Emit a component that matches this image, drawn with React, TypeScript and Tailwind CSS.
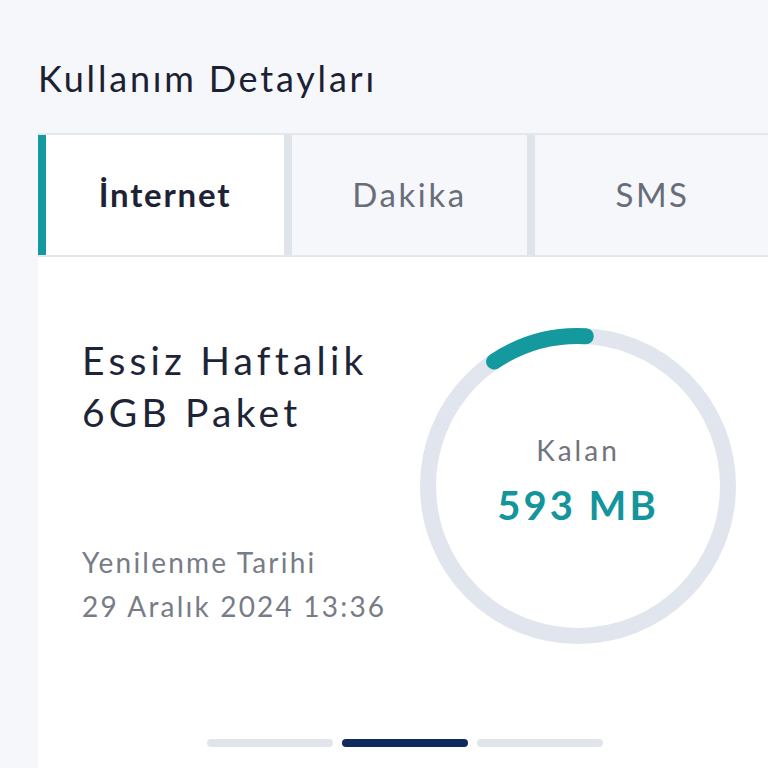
import React from "react";

const tabs = [
  { label: "İnternet", active: true },
  { label: "Dakika", active: false },
  { label: "SMS", active: false },
];

const UsageRing: React.FC = () => {
  return (
    <div className="relative w-[320px] h-[320px] shrink-0">
      <svg className="absolute inset-0" width="320" height="320" viewBox="0 0 320 320">
        <circle cx="160" cy="160" r="150" fill="none" stroke="#e1e5ed" strokeWidth="16" />
        <path
          d="M 76.1 35.6 A 150 150 0 0 1 167.8 10.2"
          fill="none"
          stroke="#14999f"
          strokeWidth="16"
          strokeLinecap="round"
        />
      </svg>
      <div className="relative flex h-full flex-col items-center justify-center pb-[12px]">
        <span className="text-[28px] leading-[40px] tracking-[3px] text-[#6f7480]">Kalan</span>
        <span className="mt-[10px] text-[40px] leading-[50px] tracking-[3px] font-bold text-[#14959c]">
          593 MB
        </span>
      </div>
    </div>
  );
};

const App: React.FC = () => {
  return (
    <div
      className="w-[768px] h-[768px] overflow-hidden bg-[#f5f7fa] pl-[38px]"
      style={{ fontFamily: "Lato, 'Noto Sans', sans-serif" }}
    >
      <h1 className="pt-[55px] pb-[32px] text-[36px] leading-[46px] tracking-[2.8px] text-[#1c2033]">
        Kullanım Detayları
      </h1>

      <div className="flex h-[124px] w-[740px] border-y-2 border-[#e4e7ec]">
        {tabs.map((tab, i) => (
          <React.Fragment key={tab.label}>
            {i > 0 && <div className="w-[8px] bg-[#dfe3ea]" />}
            <div
              className={
                tab.active
                  ? "flex w-[246px] items-center justify-center border-l-[8px] border-[#14999f] bg-white text-[33px] font-bold tracking-[1.8px] text-[#1e2235]"
                  : "flex w-[235px] items-center justify-center text-[33px] tracking-[2.6px] text-[#686d79]"
              }
            >
              {tab.label}
            </div>
          </React.Fragment>
        ))}
      </div>

      <div className="h-[520px] w-[740px] bg-white">
        <div className="flex pl-[44px]">
          <div className="w-[336px] pt-[77px]">
            <div className="text-[39px] leading-[52px] tracking-[4.2px] text-[#1e2437]">
              Essiz Haftalik
              <br />
              6GB Paket
            </div>
            <div className="mt-[102px] text-[28px] leading-[44px] tracking-[2.2px] text-[#777c87]">
              Yenilenme Tarihi
              <br />
              29 Aralık 2024 13:36
            </div>
          </div>
          <div className="pt-[69px]">
            <UsageRing />
          </div>
        </div>

        <div className="mt-[93px] flex w-[734px] justify-center gap-[9px]">
          <div className="h-[8px] w-[126px] rounded-full bg-[#e1e4ea]" />
          <div className="h-[8px] w-[126px] rounded-full bg-[#0d2b5c]" />
          <div className="h-[8px] w-[126px] rounded-full bg-[#e1e4ea]" />
        </div>
      </div>
    </div>
  );
};

export default App;
